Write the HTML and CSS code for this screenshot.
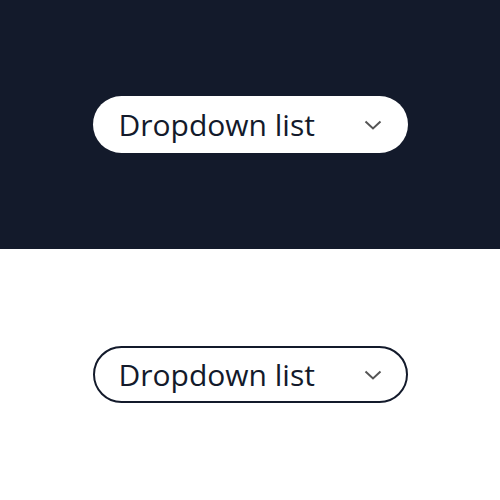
FILE: index.html
```html
<!DOCTYPE html>
<html>
<head>
<meta charset="UTF-8">
<title>Dropdown list</title>
<link rel="stylesheet" href="styles.css">
</head>
<body>
<div class="panel dark">
    <div class="dropdown filled">
        <span class="label">Dropdown list</span>
        <svg class="chevron" width="18" height="10" viewBox="0 0 18 10">
            <path d="M1.5 1.5 L9 8.5 L16.5 1.5" fill="none" stroke="#555" stroke-width="2"/>
        </svg>
    </div>
</div>
<div class="panel light">
    <div class="dropdown outline">
        <span class="label">Dropdown list</span>
        <svg class="chevron" width="18" height="10" viewBox="0 0 18 10">
            <path d="M1.5 1.5 L9 8.5 L16.5 1.5" fill="none" stroke="#555" stroke-width="2"/>
        </svg>
    </div>
</div>
</body>
</html>
```
FILE: styles.css
```css
body {
  margin: 0;
  font-family: "Open Sans", "Liberation Sans", sans-serif;
}

.panel {
  display: flex;
  align-items: center;
  justify-content: center;
}

.dark {
  height: 249px;
  background: #131a2b;
}

.light {
  height: 251px;
  background: #fff;
}

.dropdown {
  box-sizing: border-box;
  width: 315px;
  height: 57px;
  border-radius: 29px;
  padding: 0 26px;
  display: flex;
  align-items: center;
  justify-content: space-between;
  color: #131a2b;
}

.filled {
  background: #fff;
}

.outline {
  border: 2px solid #131a2b;
  padding: 0 24px;
}

.label {
  font-size: 30px;
  font-weight: 500;
  line-height: 1;
}

.chevron {
  display: block;
}
```
